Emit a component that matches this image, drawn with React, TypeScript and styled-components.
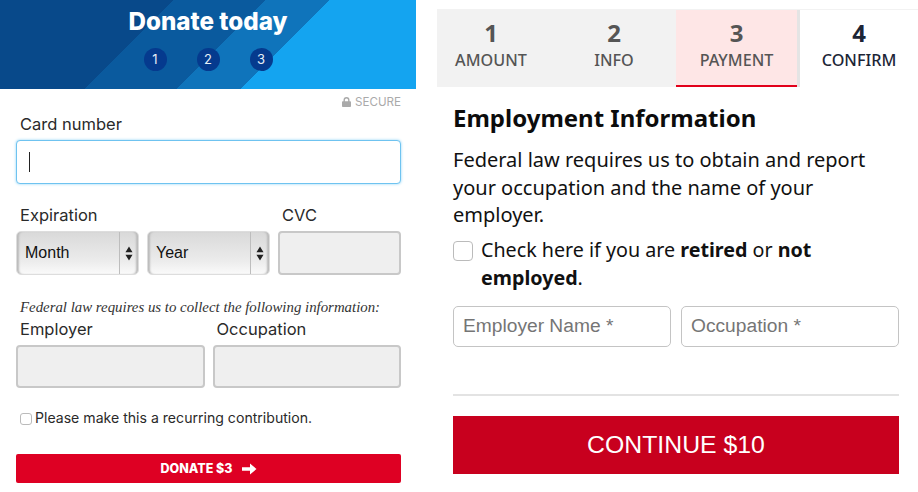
import React from "react";
import styled, { createGlobalStyle } from "styled-components";

const GlobalStyle = createGlobalStyle`
  html, body {
    margin: 0;
    padding: 0;
    background: #fff;
    overflow: hidden;
  }
  * {
    box-sizing: border-box;
  }
`;

const Page = styled.div`
  display: flex;
  width: 918px;
  height: 492px;
  gap: 21px;
`;

/* left: donate form */
const DonatePanel = styled.section`
  width: 416px;
  flex: none;
  font-family: Inter, "Liberation Sans", sans-serif;
  color: #222;
`;

const Hero = styled.header`
  height: 89px;
  padding-top: 6px;
  background: linear-gradient(
    135deg,
    #08498a 0 123px,
    #0a5a9e 123px 188px,
    #0f74bb 188px 233px,
    #14a4f0 233px
  );
  display: flex;
  flex-direction: column;
  align-items: center;
`;

const HeroTitle = styled.h1`
  margin: 0;
  font-size: 24.2px;
  line-height: 32px;
  font-weight: 800;
  color: #fff;
`;

const Dots = styled.div`
  display: flex;
  gap: 30px;
  margin-top: 10px;
`;

const Dot = styled.span`
  width: 23px;
  height: 23px;
  border-radius: 50%;
  background: #053a8e;
  color: #e8eef6;
  font-size: 13px;
  line-height: 23px;
  text-align: center;
`;

const FormBody = styled.div`
  padding: 0 15px 0 16px;
`;

const Secure = styled.div`
  display: flex;
  justify-content: flex-end;
  align-items: center;
  gap: 4px;
  height: 25px;
  color: #aaa;
  font-size: 11.6px;
`;

const FieldLabel = styled.label`
  display: block;
  font-size: 16.5px;
  line-height: 20px;
  padding-left: 4px;
  color: #2a2a2a;
`;

const CardWrap = styled.div`
  position: relative;
  margin-top: 6px;
`;

const CardInput = styled.input`
  display: block;
  width: 100%;
  height: 44px;
  border: 1px solid #6fc3f0;
  border-radius: 4px;
  background: #fff;
  box-shadow: 0 0 3px #8fd3f7;
  outline: none;
`;

const Caret = styled.span`
  position: absolute;
  left: 13px;
  top: 12px;
  width: 1px;
  height: 20px;
  background: #222;
`;

const ExpiryGrid = styled.div`
  display: grid;
  grid-template-columns: 123px 123px 123px;
  column-gap: 8px;
  margin-top: 21px;
`;

const ExpiryLabel = styled(FieldLabel)<{ $wide?: boolean }>`
  grid-column: ${(p) => (p.$wide ? "span 2" : "auto")};
  margin-bottom: 6px;
`;

const SelectBox = styled.div`
  display: flex;
  height: 44px;
  border: 1px solid #ddd;
  border-radius: 5px;
  overflow: hidden;
  background: linear-gradient(#d9d9d9, #ececec 70%, #fafafa);
  box-shadow: inset 3px 0 2px -1px #bbb, inset -3px 0 2px -1px #bbb;
  font-family: "Liberation Sans", sans-serif;
  font-size: 16px;
  color: #111;
`;

const SelectText = styled.span`
  flex: 1;
  padding-left: 8px;
  line-height: 42px;
`;

const Stepper = styled.span`
  flex: none;
  width: 19px;
  border-left: 1px solid #bdbdbd;
  display: flex;
  align-items: center;
  justify-content: center;
`;

const GreyInput = styled.input`
  display: block;
  width: 100%;
  min-width: 0;
  border: 2px solid #c8c8c8;
  border-radius: 4px;
  background: #efefef;
  outline: none;
  height: ${(p) => (p.size === 1 ? 44 : 43)}px;
`;

const Notice = styled.p`
  margin: 22px 0 0;
  padding-left: 4px;
  font-family: "Liberation Serif", serif;
  font-style: italic;
  font-size: 14.85px;
  line-height: 20px;
  color: #333;
`;

const JobGrid = styled.div`
  display: grid;
  grid-template-columns: 1fr 1fr;
  column-gap: 8px;
  row-gap: 6px;
  margin-top: 2px;
`;

const JobLabel = styled(FieldLabel)`
  line-height: 20px;
`;

const Recurring = styled.label`
  display: flex;
  align-items: center;
  gap: 3px;
  margin-top: 19px;
  padding-left: 4px;
  font-size: 14.1px;
  line-height: 22px;
  color: #2a2a2a;
`;

const SmallBox = styled.span`
  width: 12px;
  height: 12px;
  margin-top: 2px;
  border: 1px solid #bbb;
  border-radius: 3px;
  background: #fff;
`;

const DonateButton = styled.button`
  display: flex;
  align-items: center;
  justify-content: center;
  gap: 9px;
  width: 100%;
  height: 29px;
  margin-top: 25px;
  border: 0;
  border-radius: 2px;
  background: #de0023;
  color: #fff;
  font-family: Inter, "Liberation Sans", sans-serif;
  font-size: 12.5px;
  font-weight: 800;
`;

/* right: employment step */
const StepPanel = styled.section`
  flex: 1;
  min-width: 0;
  padding-top: 9px;
  font-family: "Noto Sans", "Open Sans", sans-serif;
  color: #111;
`;

const Tabs = styled.nav`
  display: grid;
  grid-template-columns: 115px 124px 121px 121px;
  height: 78px;
  border-top: 1px solid #f2f2f2;
`;

const Tab = styled.div<{ $state: "done" | "active" | "next" }>`
  display: flex;
  flex-direction: column;
  align-items: center;
  padding-top: 8px;
  color: ${(p) => (p.$state === "next" ? "#1c2536" : "#555")};
  background: ${(p) =>
    p.$state === "next" ? "#fff" : p.$state === "active" ? "#fee6e6" : "#f2f2f2"};
  border-bottom: ${(p) => (p.$state === "active" ? "2px solid #e2001a" : "0")};
  border-left: ${(p) => (p.$state === "next" ? "3px solid #e4e4e4" : "0")};

  &:first-child {
    padding-right: 7px;
  }
`;

const TabNumber = styled.span`
  font-size: 24px;
  line-height: 29px;
  font-weight: 700;
`;

const TabName = styled.span`
  font-size: 16.2px;
  line-height: 26px;
  font-weight: 500;
`;

const StepBody = styled.div`
  padding: 16px 19px 0 16px;
`;

const StepTitle = styled.h2`
  margin: 0;
  font-size: 24px;
  line-height: 30px;
  font-weight: 700;
  color: #0c0c0c;
`;

const StepText = styled.p`
  max-width: 430px;
  margin: 13px 0 0;
  font-size: 20px;
  line-height: 27.5px;
`;

const RetiredRow = styled.label`
  display: flex;
  gap: 8px;
  margin-top: 7px;
  font-size: 19.7px;
  line-height: 28px;
`;

const BigBox = styled.span`
  flex: none;
  width: 20px;
  height: 20px;
  margin-top: 5px;
  border: 1px solid #bbb;
  border-radius: 4px;
  background: #fff;
`;

const NameRow = styled.div`
  display: flex;
  gap: 10px;
  margin-top: 14px;
`;

const NameInput = styled.input`
  flex: 1;
  min-width: 0;
  height: 41px;
  padding: 0 9px;
  border: 1px solid #c4c4c4;
  border-radius: 5px;
  background: #fff;
  outline: none;
  font-family: "Liberation Sans", sans-serif;
  font-size: 19.2px;

  &::placeholder {
    color: #757575;
    opacity: 1;
  }
`;

const Rule = styled.hr`
  margin: 47px 0 0;
  border: 0;
  border-top: 2px solid #e3e3e3;
`;

const ContinueButton = styled.button`
  display: block;
  width: 100%;
  height: 58px;
  margin-top: 20px;
  border: 0;
  background: #c8001e;
  color: #fff;
  font-family: "Liberation Sans", sans-serif;
  font-size: 24.8px;
`;

const Updown = () => (
  <svg width="8" height="15" viewBox="0 0 9 17">
    <path d="M4.5 0.5 8.5 7H0.5Z M4.5 16.5 0.5 10H8.5Z" fill="#222" />
  </svg>
);

const Lock = () => (
  <svg width="9" height="10" viewBox="0 0 9 10">
    <path
      d="M1.5 4.2V3a3 3 0 0 1 6 0v1.2h.7c.4 0 .8.3.8.7v4.3c0 .4-.4.8-.8.8H.8c-.4 0-.8-.4-.8-.8V4.900c0-.4.4-.7.8-.7Zm1.400 0h3.200V3a1.600 1.600 0 0 0-3.200 0Z"
      fill="#aaa"
    />
  </svg>
);

const ArrowRight = () => (
  <svg width="15" height="12" viewBox="0 0 15 12">
    <path d="M0 4.300H8V0.500L14.500 6 8 11.500V7.700H0Z" fill="#fff" />
  </svg>
);

const steps = [
  { n: 1, name: "AMOUNT", state: "done" },
  { n: 2, name: "INFO", state: "done" },
  { n: 3, name: "PAYMENT", state: "active" },
  { n: 4, name: "CONFIRM", state: "next" },
] as const;

export default function App() {
  return (
    <Page>
      <GlobalStyle />
      <DonatePanel>
        <Hero>
          <HeroTitle>Donate today</HeroTitle>
          <Dots>
            <Dot>1</Dot>
            <Dot>2</Dot>
            <Dot>3</Dot>
          </Dots>
        </Hero>
        <FormBody>
          <Secure>
            <Lock />
            SECURE
          </Secure>
          <FieldLabel>Card number</FieldLabel>
          <CardWrap>
            <CardInput />
            <Caret />
          </CardWrap>
          <ExpiryGrid>
            <ExpiryLabel $wide>Expiration</ExpiryLabel>
            <ExpiryLabel>CVC</ExpiryLabel>
            <SelectBox>
              <SelectText>Month</SelectText>
              <Stepper>
                <Updown />
              </Stepper>
            </SelectBox>
            <SelectBox>
              <SelectText>Year</SelectText>
              <Stepper>
                <Updown />
              </Stepper>
            </SelectBox>
            <GreyInput size={1} />
          </ExpiryGrid>
          <Notice>Federal law requires us to collect the following information:</Notice>
          <JobGrid>
            <JobLabel>Employer</JobLabel>
            <JobLabel>Occupation</JobLabel>
            <GreyInput />
            <GreyInput />
          </JobGrid>
          <Recurring>
            <SmallBox />
            Please make this a recurring contribution.
          </Recurring>
          <DonateButton>
            DONATE $3
            <ArrowRight />
          </DonateButton>
        </FormBody>
      </DonatePanel>

      <StepPanel>
        <Tabs>
          {steps.map((s) => (
            <Tab key={s.n} $state={s.state}>
              <TabNumber>{s.n}</TabNumber>
              <TabName>{s.name}</TabName>
            </Tab>
          ))}
        </Tabs>
        <StepBody>
          <StepTitle>Employment Information</StepTitle>
          <StepText>
            Federal law requires us to obtain and report your occupation and the name of your
            employer.
          </StepText>
          <RetiredRow>
            <BigBox />
            <span>
              Check here if you are <b>retired</b> or <b>not employed</b>.
            </span>
          </RetiredRow>
          <NameRow>
            <NameInput placeholder="Employer Name *" />
            <NameInput placeholder="Occupation *" />
          </NameRow>
          <Rule />
          <ContinueButton>CONTINUE $10</ContinueButton>
        </StepBody>
      </StepPanel>
    </Page>
  );
}
